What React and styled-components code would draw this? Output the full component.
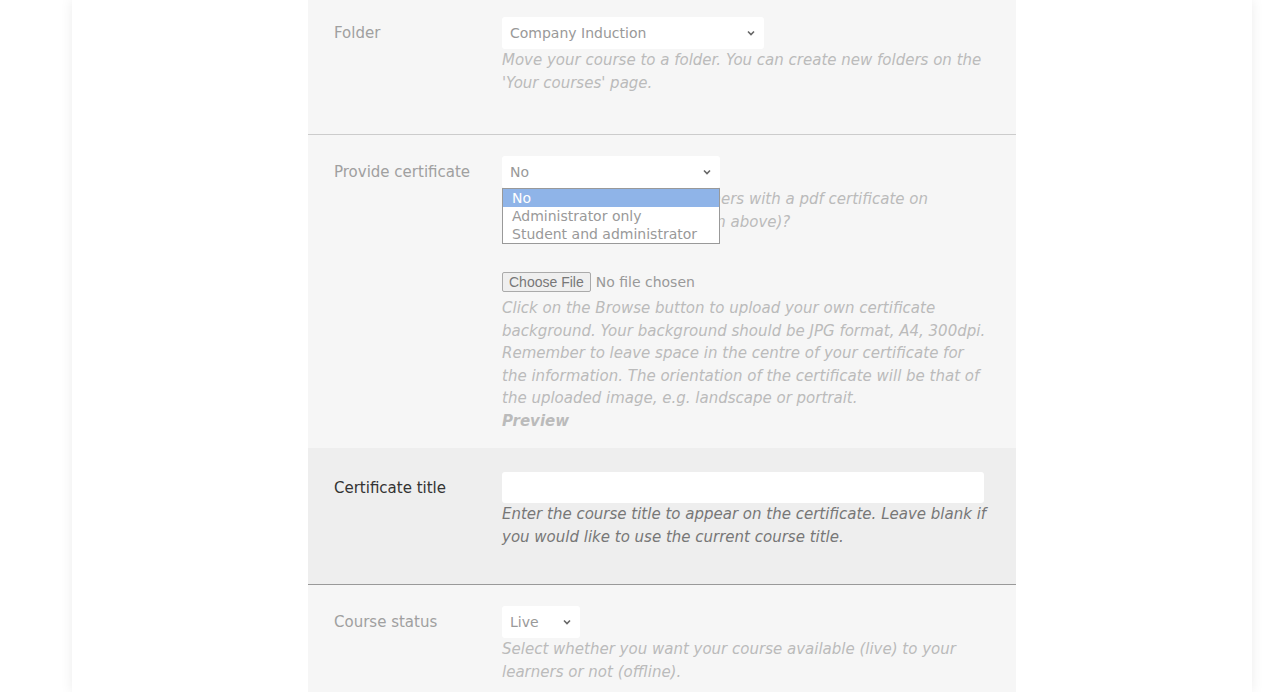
import React from "react";
import styled, { createGlobalStyle } from "styled-components";

const Global = createGlobalStyle`
  html, body { margin: 0; background: #fff; height: 692px; overflow: hidden; }
  body { font-family: Tahoma, "DejaVu Sans", sans-serif; }
`;

const Page = styled.div`
  margin: 0 72px 0 72px;
  width: 1180px;
  height: 692px;
  background: #fff;
  box-shadow: 0 0 12px rgba(0, 0, 0, 0.08);
  display: flex;
  justify-content: flex-start;
`;

const Form = styled.div`
  margin-left: 236px;
  width: 708px;
  background: #f6f6f6;
`;

const Row = styled.div`
  display: grid;
  grid-template-columns: 194px 1fr;
  padding: ${(p) => p.$pad};
  background: ${(p) => (p.$active ? "#eeeeee" : "#f6f6f6")};
  border-bottom: ${(p) => p.$border || "none"};
  position: relative;
`;

const Label = styled.div`
  font-size: 15px;
  color: ${(p) => (p.$active ? "#333" : "#a0a0a0")};
  padding-left: 26px;
  line-height: 32px;
`;

const Field = styled.div`
  padding-right: 24px;
  position: relative;
`;

const Select = styled.div`
  width: ${(p) => p.$w}px;
  height: 32px;
  box-sizing: border-box;
  background: #fff;
  border-radius: 3px;
  display: flex;
  align-items: center;
  justify-content: space-between;
  padding: 0 8px;
  font-size: 14px;
  color: #999;
`;

const Input = styled.div`
  width: 482px;
  height: 31px;
  background: #fff;
  border-radius: 3px;
`;

const Help = styled.p`
  margin: 0;
  font-style: italic;
  font-size: 15px;
  line-height: 22.5px;
  color: ${(p) => (p.$active ? "#777" : "#bbb")};
`;

const Bold = styled.span`
  font-weight: bold;
`;

const FileRow = styled.div`
  display: flex;
  align-items: center;
  gap: 5px;
  margin: 39px 0 5px;
  font-size: 14px;
  color: #999;
`;

const FileBtn = styled.span`
  border: 1px solid #aaa;
  border-radius: 2px;
  background: #efefef;
  padding: 1px 6px;
  color: #777;
  font-family: "Liberation Sans", Arial, sans-serif;
  font-size: 14px;
`;

const Menu = styled.div`
  position: absolute;
  left: 0;
  top: 32px;
  width: 218px;
  box-sizing: border-box;
  border: 1px solid #999;
  background: #fff;
  font-size: 14px;
  line-height: 18px;
  color: #999;
`;

const Option = styled.div`
  padding-left: 9px;
  background: ${(p) => (p.$sel ? "#8fb4e8" : "#fff")};
  color: ${(p) => (p.$sel ? "#fff" : "#999")};
`;

const Chevron = () => (
  <svg width="10" height="10" viewBox="0 0 10 10">
    <path d="M2 3.5 L5 6.5 L8 3.5" stroke="#666" strokeWidth="1.6" fill="none" />
  </svg>
);

export default function App() {
  return (
    <>
      <Global />
      <Page>
        <Form>
          <Row $pad="17px 0 40px" $border="1px solid #ccc">
            <Label>Folder</Label>
            <Field>
              <Select $w={262}>Company Induction<Chevron /></Select>
              <Help>Move your course to a folder. You can create new folders on the 'Your courses' page.</Help>
            </Field>
          </Row>
          <Row $pad="21px 0 16px">
            <Label>Provide certificate</Label>
            <Field>
              <Select $w={218}>No<Chevron /></Select>
              <Help>Do you want to provide learners with a pdf certificate on completion (see Complete On above)?</Help>
              <Menu>
                <Option $sel>No</Option>
                <Option>Administrator only</Option>
                <Option>Student and administrator</Option>
              </Menu>
              <FileRow>
                <FileBtn>Choose File</FileBtn>No file chosen
              </FileRow>
              <Help>
                Click on the Browse button to upload your own certificate background. Your background should be JPG format, A4, 300dpi. Remember to leave space in the centre of your certificate for the information. The orientation of the certificate will be that of the uploaded image, e.g. landscape or portrait.
                <br />
                <Bold>Preview</Bold>
              </Help>
            </Field>
          </Row>
          <Row $active $pad="24px 0 36px" $border="1px solid #999">
            <Label $active>Certificate title</Label>
            <Field>
              <Input />
              <Help $active>Enter the course title to appear on the certificate. Leave blank if you would like to use the current course title.</Help>
            </Field>
          </Row>
          <Row $pad="21px 0 40px">
            <Label>Course status</Label>
            <Field>
              <Select $w={78}>Live<Chevron /></Select>
              <Help>Select whether you want your course available (live) to your learners or not (offline).</Help>
            </Field>
          </Row>
        </Form>
      </Page>
    </>
  );
}
